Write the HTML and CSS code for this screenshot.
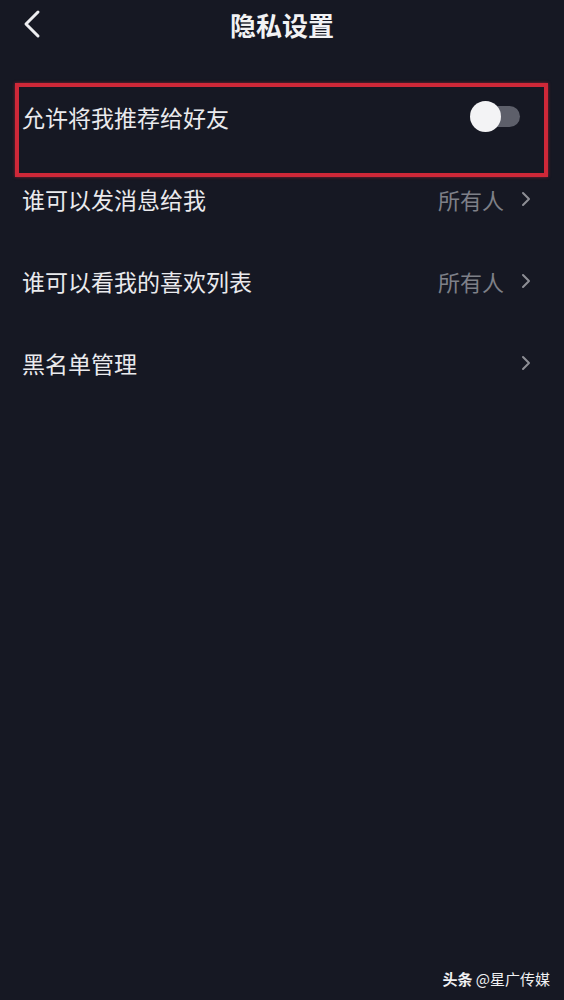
FILE: index.html
```html
<!DOCTYPE html>
<html lang="zh-CN">
<head>
<meta charset="utf-8">
<title>隐私设置</title>
<link rel="stylesheet" href="styles.css">
</head>
<body>
<div class="page">
  <header class="topbar">
    <svg class="back" width="18" height="30" viewBox="0 0 18 30"><path d="M15 3 L3 15 L15 27" fill="none" stroke="#ededf0" stroke-width="3" stroke-linecap="round" stroke-linejoin="round"/></svg>
    <h1 class="title">隐私设置</h1>
  </header>
  <ul class="list">
    <li class="row row-first">
      <span class="label">允许将我推荐给好友</span>
      <span class="toggle"><span class="knob"></span></span>
      <span class="highlight"></span>
    </li>
    <li class="row">
      <span class="label">谁可以发消息给我</span>
      <span class="value">所有人</span>
      <svg class="chev" width="12" height="16" viewBox="0 0 12 16"><path d="M3 2 L9 8 L3 14" fill="none" stroke="#8d8e95" stroke-width="2" stroke-linecap="round" stroke-linejoin="round"/></svg>
    </li>
    <li class="row">
      <span class="label">谁可以看我的喜欢列表</span>
      <span class="value">所有人</span>
      <svg class="chev" width="12" height="16" viewBox="0 0 12 16"><path d="M3 2 L9 8 L3 14" fill="none" stroke="#8d8e95" stroke-width="2" stroke-linecap="round" stroke-linejoin="round"/></svg>
    </li>
    <li class="row">
      <span class="label">黑名单管理</span>
      <span class="value"></span>
      <svg class="chev" width="12" height="16" viewBox="0 0 12 16"><path d="M3 2 L9 8 L3 14" fill="none" stroke="#8d8e95" stroke-width="2" stroke-linecap="round" stroke-linejoin="round"/></svg>
    </li>
  </ul>
  <footer class="footer"><b>头条</b> @星广传媒</footer>
</div>
</body>
</html>
```
FILE: styles.css
```css
* { box-sizing: border-box; }
html, body {
  margin: 0;
  padding: 0;
  background: #161823;
}
body {
  font-family: "Noto Sans CJK SC", "Noto Sans", sans-serif;
  color: #ececef;
}
.page {
  min-height: 1000px;
  display: flex;
  flex-direction: column;
}
.topbar {
  height: 50px;
  display: flex;
  align-items: center;
  justify-content: center;
  position: relative;
}
.back {
  position: absolute;
  left: 23px;
  top: 9px;
}
.title {
  margin: 0;
  font-size: 26px;
  font-weight: 700;
  line-height: 50px;
  color: #f2f2f4;
}
.list {
  list-style: none;
  margin: 0;
  padding: 26px 0 0 0;
}
.row {
  height: 82px;
  display: flex;
  align-items: center;
  padding: 0 32px 0 22px;
  position: relative;
}
.label {
  flex: 1;
  font-size: 23px;
  color: #eaeaed;
  line-height: 1;
}
.value {
  font-size: 22px;
  color: #7e8088;
  line-height: 1;
  margin-right: 16px;
}
.chev {
  display: block;
}
.row-first {
  padding-right: 44px;
}
.toggle {
  position: relative;
  width: 50px;
  height: 31px;
  margin-top: -1px;
}
.toggle::before {
  content: "";
  position: absolute;
  left: 10px;
  top: 5px;
  width: 40px;
  height: 21px;
  border-radius: 11px;
  background: #5d5f6a;
}
.knob {
  position: absolute;
  left: 0;
  top: 0;
  width: 31px;
  height: 31px;
  border-radius: 50%;
  background: #f3f3f5;
}
.highlight {
  position: absolute;
  left: 15px;
  top: 7px;
  width: 533px;
  height: 94px;
  border: 4px solid #cf2838;
  box-shadow: 0 0 3px rgba(207, 40, 56, 0.6);
  pointer-events: none;
}
.footer {
  margin-top: auto;
  align-self: flex-end;
  padding: 0 14px 11px 0;
  font-size: 15px;
  line-height: 20px;
  color: #f0f0f2;
}
.footer b {
  font-weight: 700;
}
```
